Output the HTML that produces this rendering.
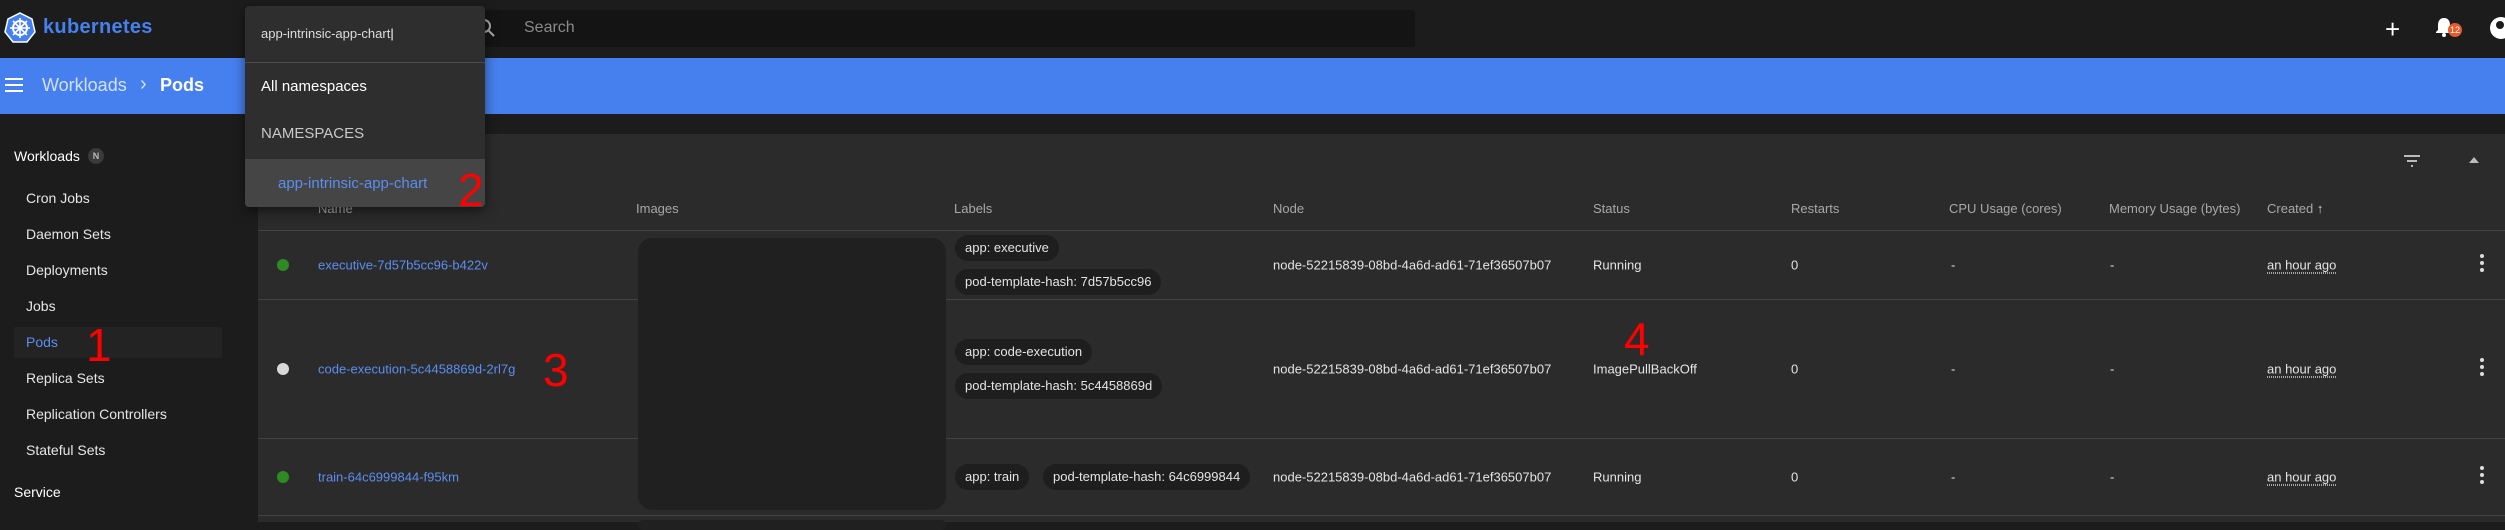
<!DOCTYPE html>
<html><head><meta charset="utf-8"><style>
*{margin:0;padding:0;box-sizing:border-box}
body{width:2505px;height:522px;overflow:hidden;background:#1c1c1c;font-family:"Liberation Sans",sans-serif;position:relative;color:#e0e0e0}
.a{position:absolute;white-space:nowrap}
.top{left:0;top:0;width:2505px;height:58px;background:#1c1c1c}
.blue{left:0;top:58px;width:2505px;height:56px;background:#4680ee}
.side{left:0;top:114px;width:258px;height:408px;background:#1c1c1c}
.card{left:258px;top:134px;width:2247px;height:388px;background:#2b2b2b}
.si{font-size:14px;color:#e6e6e6;left:26px;transform:translateY(-50%)}
.hd{font-size:13px;color:#a8a8a8;top:201px}
.line{height:1px;background:#444;left:258px;width:2247px}
.nm{font-size:13px;color:#5b8ef0;left:318px;transform:translateY(-50%)}
.dot{width:12px;height:12px;border-radius:50%;left:277px}
.chip{background:#1e1e1e;border-radius:13px;height:26px;line-height:26px;padding:0 10px;font-size:13px;color:#e4e4e4}
.c{font-size:13px;color:#e4e4e4;transform:translateY(-50%)}
.red{color:#f00;font-size:46px;line-height:1}
.ago{text-decoration:underline dotted;text-underline-offset:3px}
.keb{left:2480px;width:4px}
.keb i{display:block;width:4px;height:4px;border-radius:50%;background:#ddd;margin-bottom:3px}
</style></head><body>
<div class="a top"></div>
<svg class="a" style="left:4px;top:12px" width="32" height="32" viewBox="0 0 32 32"><polygon points="16,1 28,7 31,20 23,30 9,30 1,20 4,7" fill="#4680ee" stroke="#fff" stroke-width="1.5"/><circle cx="16" cy="16" r="7" fill="none" stroke="#fff" stroke-width="2"/><g stroke="#fff" stroke-width="1.6"><line x1="16" y1="6" x2="16" y2="26"/><line x1="6" y1="16" x2="26" y2="16"/><line x1="9" y1="9" x2="23" y2="23"/><line x1="23" y1="9" x2="9" y2="23"/></g><circle cx="16" cy="16" r="2" fill="#fff"/></svg>
<div class="a" style="left:43px;top:16px;font-size:20px;font-weight:bold;color:#4680ee;letter-spacing:0.3px">kubernetes</div>
<div class="a" style="left:470px;top:10px;width:945px;height:37px;background:#141414;border-radius:3px"></div>
<svg class="a" style="left:476px;top:18px" width="20" height="20" viewBox="0 0 20 20"><circle cx="8" cy="8" r="6" fill="none" stroke="#aaa" stroke-width="2"/><line x1="12" y1="12" x2="18" y2="18" stroke="#aaa" stroke-width="2"/></svg>
<div class="a" style="left:524px;top:19px;font-size:16px;color:#8a8a8a">Search</div>
<div class="a" style="left:2385px;top:14px;font-size:26px;color:#fff;font-weight:300">+</div>
<svg class="a" style="left:2435px;top:16px" width="18" height="22" viewBox="0 0 18 22"><path d="M9 2c-4 0-6 3-6 7v5l-2 2v1h16v-1l-2-2V9c0-4-2-7-6-7z" fill="#fff"/><circle cx="9" cy="19" r="2" fill="#fff"/></svg>
<div class="a" style="left:2448px;top:23px;width:14px;height:14px;border-radius:50%;background:#e8592b;font-size:9px;color:#fff;text-align:center;line-height:14px">12</div>
<div class="a" style="left:2490px;top:17px;width:22px;height:22px;border-radius:50%;background:#fff"></div>
<div class="a" style="left:2496px;top:21px;width:8px;height:8px;border-radius:50%;background:#1c1c1c"></div>

<div class="a blue"></div>
<div class="a" style="left:5px;top:78px;width:18px;height:2px;background:#fff;box-shadow:0 6px 0 #fff,0 12px 0 #fff"></div>
<div class="a" style="left:42px;top:75px;font-size:18px;color:#d3e0fb">Workloads</div>
<div class="a" style="left:140px;top:73px;font-size:20px;color:#d3e0fb">›</div>
<div class="a" style="left:160px;top:75px;font-size:18px;color:#fff;font-weight:bold">Pods</div>

<div class="a side"></div>
<div class="a" style="left:14px;top:148px;font-size:14px;color:#fff">Workloads</div>
<div class="a" style="left:88px;top:148px;width:16px;height:16px;border-radius:50%;background:#3a3a3a;font-size:9px;color:#bbb;text-align:center;line-height:16px;font-weight:bold">N</div>
<div class="a si" style="top:198px">Cron Jobs</div>
<div class="a si" style="top:234px">Daemon Sets</div>
<div class="a si" style="top:270px">Deployments</div>
<div class="a si" style="top:306px">Jobs</div>
<div class="a" style="left:14px;top:327px;width:208px;height:31px;background:#232323"></div>
<div class="a si" style="top:342px;color:#5b8ef0">Pods</div>
<div class="a si" style="top:378px">Replica Sets</div>
<div class="a si" style="top:414px">Replication Controllers</div>
<div class="a si" style="top:450px">Stateful Sets</div>
<div class="a" style="left:14px;top:484px;font-size:14px;color:#fff">Service</div>
<div class="a red" style="left:86px;top:322px">1</div>

<div class="a card"></div>
<svg class="a" style="left:2402px;top:153px" width="20" height="16" viewBox="0 0 20 16"><g stroke="#bbb" stroke-width="2"><line x1="2" y1="3" x2="18" y2="3"/><line x1="5" y1="8" x2="15" y2="8"/><line x1="9" y1="13" x2="11" y2="13"/></g></svg>
<div class="a" style="left:2469px;top:157px;width:0;height:0;border-left:5px solid transparent;border-right:5px solid transparent;border-bottom:6px solid #bbb"></div>

<div class="a hd" style="left:318px">Name</div>
<div class="a hd" style="left:636px">Images</div>
<div class="a hd" style="left:954px">Labels</div>
<div class="a hd" style="left:1273px">Node</div>
<div class="a hd" style="left:1593px">Status</div>
<div class="a hd" style="left:1791px">Restarts</div>
<div class="a hd" style="left:1949px">CPU Usage (cores)</div>
<div class="a hd" style="left:2109px">Memory Usage (bytes)</div>
<div class="a hd" style="left:2267px">Created <span style="color:#ccc">↑</span></div>
<div class="a line" style="top:230px"></div>
<div class="a line" style="top:299px"></div>
<div class="a line" style="top:438px"></div>
<div class="a line" style="top:515px"></div>

<div class="a" style="left:638px;top:238px;width:308px;height:272px;background:#202020;border-radius:14px"></div>
<div class="a" style="left:638px;top:520px;width:308px;height:10px;background:#202020;border-radius:10px"></div>

<div class="a dot" style="top:259px;background:#2e8b22"></div>
<div class="a nm" style="top:265px">executive-7d57b5cc96-b422v</div>
<div class="a chip" style="left:955px;top:235px">app: executive</div>
<div class="a chip" style="left:955px;top:269px">pod-template-hash: 7d57b5cc96</div>
<div class="a c" style="left:1273px;top:265px">node-52215839-08bd-4a6d-ad61-71ef36507b07</div>
<div class="a c" style="left:1593px;top:265px">Running</div>
<div class="a c" style="left:1791px;top:265px">0</div>
<div class="a c" style="left:1951px;top:265px">-</div>
<div class="a c" style="left:2110px;top:265px">-</div>
<div class="a c ago" style="left:2267px;top:265px">an hour ago</div>
<div class="a keb" style="top:254px"><i></i><i></i><i></i></div>

<div class="a dot" style="top:363px;background:#d8d8d8"></div>
<div class="a nm" style="top:369px">code-execution-5c4458869d-2rl7g</div>
<div class="a red" style="left:543px;top:347px">3</div>
<div class="a chip" style="left:955px;top:339px">app: code-execution</div>
<div class="a chip" style="left:955px;top:373px">pod-template-hash: 5c4458869d</div>
<div class="a c" style="left:1273px;top:369px">node-52215839-08bd-4a6d-ad61-71ef36507b07</div>
<div class="a c" style="left:1593px;top:369px">ImagePullBackOff</div>
<div class="a red" style="left:1624px;top:316px">4</div>
<div class="a c" style="left:1791px;top:369px">0</div>
<div class="a c" style="left:1951px;top:369px">-</div>
<div class="a c" style="left:2110px;top:369px">-</div>
<div class="a c ago" style="left:2267px;top:369px">an hour ago</div>
<div class="a keb" style="top:358px"><i></i><i></i><i></i></div>

<div class="a dot" style="top:471px;background:#2e8b22"></div>
<div class="a nm" style="top:477px">train-64c6999844-f95km</div>
<div class="a chip" style="left:955px;top:464px">app: train</div>
<div class="a chip" style="left:1043px;top:464px">pod-template-hash: 64c6999844</div>
<div class="a c" style="left:1273px;top:477px">node-52215839-08bd-4a6d-ad61-71ef36507b07</div>
<div class="a c" style="left:1593px;top:477px">Running</div>
<div class="a c" style="left:1791px;top:477px">0</div>
<div class="a c" style="left:1951px;top:477px">-</div>
<div class="a c" style="left:2110px;top:477px">-</div>
<div class="a c ago" style="left:2267px;top:477px">an hour ago</div>
<div class="a keb" style="top:466px"><i></i><i></i><i></i></div>

<div class="a" style="left:245px;top:6px;width:240px;height:201px;background:#2e2e2e;border-radius:4px;box-shadow:0 4px 12px rgba(0,0,0,.5);overflow:hidden">
  <div class="a" style="left:16px;top:20px;font-size:13px;color:#ddd">app-intrinsic-app-chart<span style="color:#fff">|</span></div>
  <div class="a" style="left:0;top:56px;width:240px;height:1px;background:#4a4a4a"></div>
  <div class="a" style="left:16px;top:72px;font-size:15px;color:#fff">All namespaces</div>
  <div class="a" style="left:16px;top:119px;font-size:15px;color:#c8c8c8">NAMESPACES</div>
  <div class="a" style="left:0;top:153px;width:240px;height:48px;background:#454545"></div>
  <div class="a" style="left:33px;top:169px;font-size:15px;color:#5b8ef0">app-intrinsic-app-chart</div>
  <div class="a red" style="left:213px;top:161px">2</div>
</div>
</body></html>
